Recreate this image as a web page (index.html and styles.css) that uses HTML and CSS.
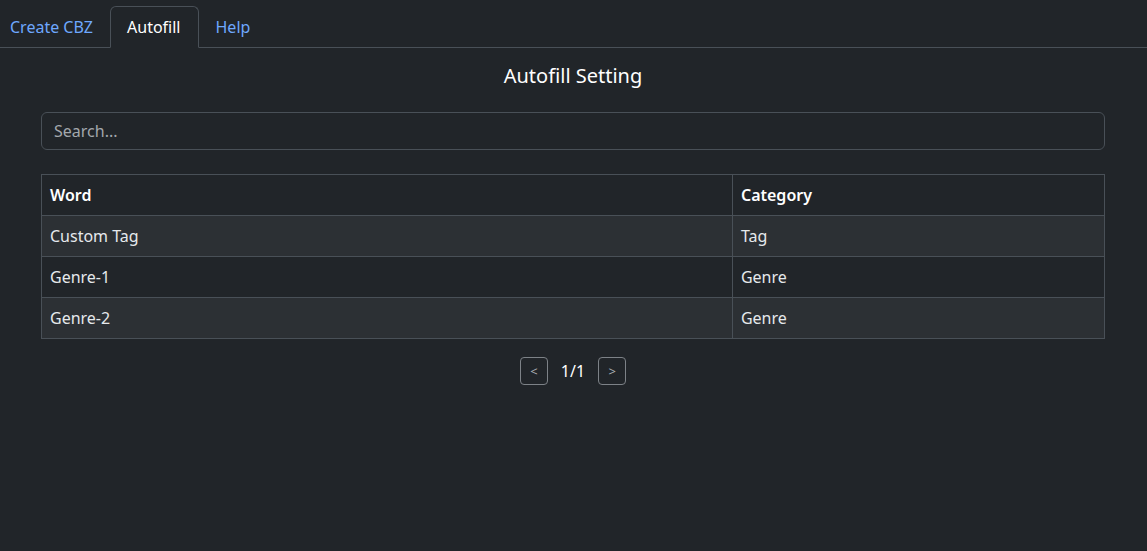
FILE: index.html
```html
<!DOCTYPE html>
<html lang="en">
<head>
<meta charset="utf-8">
<title>Autofill</title>
<link rel="stylesheet" href="styles.css">
</head>
<body>
<nav class="tabs">
  <a class="tab first" href="#">Create CBZ</a>
  <a class="tab active" href="#">Autofill</a>
  <a class="tab" href="#">Help</a>
</nav>
<main class="page">
  <h2 class="title">Autofill Setting</h2>
  <input class="search" type="text" placeholder="Search...">
  <table class="grid">
    <colgroup><col class="c-word"><col class="c-cat"></colgroup>
    <thead>
      <tr><th>Word</th><th>Category</th></tr>
    </thead>
    <tbody>
      <tr class="odd"><td>Custom Tag</td><td>Tag</td></tr>
      <tr><td>Genre-1</td><td>Genre</td></tr>
      <tr class="odd"><td>Genre-2</td><td>Genre</td></tr>
    </tbody>
  </table>
  <div class="pager">
    <button class="pbtn">&lt;</button>
    <span class="pnum">1/1</span>
    <button class="pbtn">&gt;</button>
  </div>
</main>
</body>
</html>
```
FILE: styles.css
```css
html, body {
  margin: 0;
  padding: 0;
  background: #212529;
  color: #dee2e6;
  font-family: "Noto Sans", "Open Sans", sans-serif;
  font-size: 16px;
  line-height: 24px;
}
body {
  min-height: 551px;
}
.tabs {
  display: flex;
  margin-top: 6px;
  border-bottom: 1px solid #495057;
}
.tab {
  display: block;
  padding: 8px 16px;
  border: 1px solid transparent;
  border-top-left-radius: 6px;
  border-top-right-radius: 6px;
  margin-bottom: -1px;
  color: #6ea8fe;
  text-decoration: none;
}
.tab.first {
  padding-left: 9px;
}
.tab.active {
  color: #ffffff;
  border-color: #495057 #495057 #212529;
  background: #212529;
  padding-right: 17px;
}
.page {
  padding: 0 42px 0 41px;
  display: flex;
  flex-direction: column;
}
.title {
  margin: 16px 0 24px;
  text-align: center;
  font-size: 20px;
  line-height: 24px;
  font-weight: 400;
  color: #ffffff;
}
.search {
  box-sizing: border-box;
  width: 100%;
  height: 38px;
  padding: 6px 12px;
  border: 1px solid #495057;
  border-radius: 6px;
  background: #212529;
  color: #dee2e6;
  font: inherit;
  outline: none;
}
.search::placeholder {
  color: #a3a8ad;
}
.grid {
  margin-top: 24px;
  width: 100%;
  border-collapse: collapse;
}
.c-word { width: 65%; }
.grid th, .grid td {
  border: 1px solid #495057;
  padding: 8px;
  text-align: left;
  height: 24px;
  color: #e6e9ec;
}
.grid th {
  font-weight: 600;
  color: #ffffff;
}
.grid tr.odd td {
  background: #2c3034;
}
.pager {
  margin-top: 18px;
  display: flex;
  justify-content: center;
  align-items: center;
  gap: 13px;
}
.pbtn {
  box-sizing: border-box;
  width: 28px;
  height: 28px;
  padding: 0;
  border: 1px solid #7d8287;
  border-radius: 4px;
  background: transparent;
  color: #a9aeb3;
  font-family: "Noto Sans", sans-serif;
  font-size: 13px;
  line-height: 1;
}
.pnum {
  color: #ffffff;
}
```
